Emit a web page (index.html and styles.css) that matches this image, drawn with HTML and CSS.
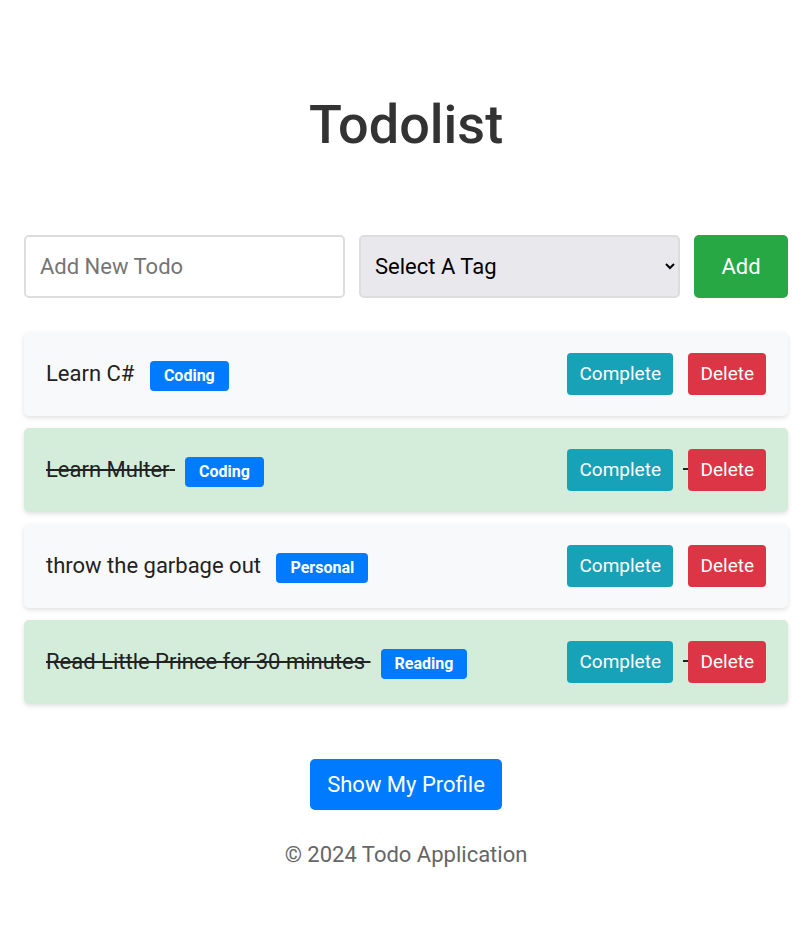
FILE: index.html
```html
<!DOCTYPE html>
<html lang="en">
<head>
<meta charset="utf-8">
<title>Todolist</title>
<link rel="stylesheet" href="styles.css">
</head>
<body>
<div class="container">
  <h1 class="title">Todolist</h1>
  <form class="add-row">
    <input class="todo-input" type="text" placeholder="Add New Todo">
    <select class="tag-select">
      <option>Select A Tag</option>
      <option>Coding</option>
      <option>Personal</option>
      <option>Reading</option>
    </select>
    <button class="btn-add" type="button">Add</button>
  </form>
  <ul class="todo-list">
    <li class="todo"><div class="todo-left"><span class="todo-text">Learn C#</span> <span class="badge">Coding</span></div><div class="todo-actions"><button class="btn btn-complete">Complete</button> <button class="btn btn-delete">Delete</button></div></li>
    <li class="todo done"><div class="todo-left"><span class="todo-text">Learn Multer</span> <span class="badge">Coding</span></div><div class="todo-actions"><button class="btn btn-complete">Complete</button> <button class="btn btn-delete">Delete</button></div></li>
    <li class="todo"><div class="todo-left"><span class="todo-text">throw the garbage out</span> <span class="badge">Personal</span></div><div class="todo-actions"><button class="btn btn-complete">Complete</button> <button class="btn btn-delete">Delete</button></div></li>
    <li class="todo done"><div class="todo-left"><span class="todo-text">Read Little Prince for 30 minutes</span> <span class="badge">Reading</span></div><div class="todo-actions"><button class="btn btn-complete">Complete</button> <button class="btn btn-delete">Delete</button></div></li>
  </ul>
  <div class="profile-wrap">
    <button class="btn-profile">Show My Profile</button>
  </div>
  <footer class="footer">© 2024 Todo Application</footer>
</div>
</body>
</html>
```
FILE: styles.css
```css
* { box-sizing: border-box; }
html, body { margin: 0; padding: 0; background: #fff; }
body {
  font-family: Roboto, "Liberation Sans", Arial, sans-serif;
  color: #222;
}
.container {
  padding: 0 22px 40px 24px;
}
.title {
  margin: 93px 0 0;
  font-size: 54px;
  font-weight: 500;
  line-height: normal;
  color: #333;
  text-align: center;
}
.add-row {
  margin-top: 79px;
  display: grid;
  grid-template-columns: minmax(0, 1fr) minmax(0, 1fr) 94px;
  column-gap: 14px;
}
.todo-input, .tag-select {
  width: 100%;
  height: 63px;
  border: 2px solid #ddd;
  border-radius: 5px;
  font-family: inherit;
  font-size: 22px;
}
.todo-input { background: #fff; color: #222; outline: none; padding: 0 14px; }
.todo-input::placeholder { color: #757575; }
.tag-select {
  background-color: #e9e9ed;
  color: #000;
  padding: 0 10px;
}
.btn-add {
  height: 63px;
  padding: 0;
  border: none;
  border-radius: 5px;
  background: #28a745;
  color: #fff;
  font-family: inherit;
  font-size: 22px;
}
.todo-list {
  list-style: none;
  margin: 34px 0 0;
  padding: 0;
}
.todo {
  display: flex;
  align-items: center;
  justify-content: space-between;
  padding: 21px 22px;
  margin-bottom: 12px;
  background: #f8f9fa;
  border-radius: 5px;
  box-shadow: 0 2px 5px rgba(0,0,0,0.12);
  font-size: 22px;
}
.todo.done {
  background: #d4edda;
  text-decoration: line-through;
}
.todo-left { position: relative; top: 1px; }
.todo-text { color: #222; }
.badge {
  display: inline-block;
  margin-left: 10px;
  padding: 5px 14px;
  line-height: 20px;
  font-size: 16px;
  font-weight: 700;
  color: #fff;
  background: #007bff;
  border-radius: 4px;
  vertical-align: middle;
  position: relative;
  top: 1px;
}
.todo-actions { white-space: nowrap; }
.btn {
  display: inline-block;
  border: none;
  border-radius: 4px;
  padding: 10px 12px;
  line-height: 22px;
  font-family: inherit;
  font-size: 19px;
  color: #fff;
  vertical-align: middle;
}
.btn-complete { background: #17a2b8; margin-right: 10px; }
.btn-delete { background: #dc3545; }
.profile-wrap {
  text-align: center;
  margin-top: 55px;
}
.btn-profile {
  border: none;
  border-radius: 5px;
  background: #007bff;
  color: #fff;
  font-family: inherit;
  font-size: 22px;
  line-height: 27px;
  padding: 12px 17px;
}
.footer {
  margin-top: 32px;
  text-align: center;
  font-size: 22px;
  color: #666;
}
```
